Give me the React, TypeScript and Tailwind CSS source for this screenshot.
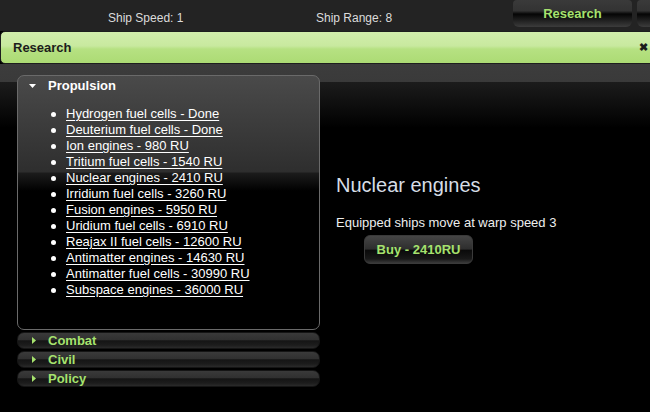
import React from "react";

const items = [
  "Hydrogen fuel cells - Done",
  "Deuterium fuel cells - Done",
  "Ion engines - 980 RU",
  "Tritium fuel cells - 1540 RU",
  "Nuclear engines - 2410 RU",
  "Irridium fuel cells - 3260 RU",
  "Fusion engines - 5950 RU",
  "Uridium fuel cells - 6910 RU",
  "Reajax II fuel cells - 12600 RU",
  "Antimatter engines - 14630 RU",
  "Antimatter fuel cells - 30990 RU",
  "Subspace engines - 36000 RU",
];

function Collapsed({ label }: { label: string }) {
  return (
    <div className="h-[17px] rounded-[7px] border border-[#151515] bg-[linear-gradient(to_bottom,#3a3a3a_0%,#303030_45%,#151515_52%,#1c1c1c_80%,#2a2a2a_100%)] flex items-center">
      <svg width="4" height="7" viewBox="0 0 4 7" className="ml-[14px]">
        <polygon points="0,0 4,3.5 0,7" fill="#a6e26e" />
      </svg>
      <span className="ml-[12px] text-[13px] font-bold text-[#a6e26e] leading-none">{label}</span>
    </div>
  );
}

const tabBg =
  "bg-[linear-gradient(to_bottom,#3a3a3a_0%,#333_40%,#050505_52%,#1a1a1a_70%,#3c3c3c_100%)]";

export default function App() {
  return (
    <div className="w-[650px] h-[412px] overflow-hidden bg-black font-['Liberation_Sans',Arial,sans-serif]">
      {/* top bar */}
      <div className="h-[31px] bg-[#232323] flex items-start overflow-hidden">
        <span className="shrink-0 ml-[108px] w-[208px] pt-[11px] text-[12px] leading-[14px] text-[#dcdcdc]">Ship Speed: 1</span>
        <span className="shrink-0 w-[197px] pt-[11px] text-[12px] leading-[14px] text-[#dcdcdc]">Ship Range: 8</span>
        <div className={`shrink-0 w-[119px] h-[27px] rounded-t-[4px] rounded-b-[6px] ${tabBg} flex items-center justify-center`}>
          <span className="text-[13px] font-bold text-[#a6e26e] leading-none">Research</span>
        </div>
        <div className={`shrink-0 ml-[5px] w-[40px] h-[27px] rounded-t-[4px] rounded-b-[6px] ${tabBg}`} />
      </div>

      {/* green header bar */}
      <div className="h-[33px] w-[654px] rounded-l-[5px] border border-[#1e1e1e] bg-[linear-gradient(to_bottom,#d2eeac_0%,#c8e99f_45%,#b6e182_55%,#acdb74_100%)] flex items-center justify-between pl-[12px] pr-[5px]">
        <span className="text-[13px] font-bold text-[#1c1c1c] leading-none">Research</span>
        <span className="text-[11px] font-bold text-[#1c1c1c] leading-none">✖</span>
      </div>

      {/* body */}
      <div className="h-[348px] bg-[linear-gradient(to_bottom,#3c3c3c_0px,#3a3a3a_18px,#1c1c1c_18px,#000_64px)] flex items-start">
        <div className="ml-[17px] mt-[11px] w-[303px] flex flex-col">
          <div className="h-[255px] rounded-[7px] border border-[#6a6a6a] bg-[linear-gradient(to_bottom,#4a4a4a_0px,#2e2e2e_96px,#1c1c1c_97px,#000_115px)]">
            <div className="h-[19px] flex items-center">
              <svg width="7" height="4" viewBox="0 0 7 4" className="ml-[11px]">
                <polygon points="0,0 7,0 3.5,4" fill="#ffffff" />
              </svg>
              <span className="ml-[12px] text-[13px] font-bold text-white leading-none">Propulsion</span>
            </div>
            <ul className="mt-[11px]">
              {items.map((t) => (
                <li key={t} className="h-[16px] flex items-center">
                  <span className="ml-[33px] w-[5px] h-[5px] rounded-full bg-white" />
                  <span className="ml-[10px] text-[13px] leading-[16px] text-white underline underline-offset-[2px]">{t}</span>
                </li>
              ))}
            </ul>
          </div>
          <div className="mt-[2px] flex flex-col gap-[2px]">
            <Collapsed label="Combat" />
            <Collapsed label="Civil" />
            <Collapsed label="Policy" />
          </div>
        </div>

        <div className="ml-[16px] mt-[110px] flex flex-col">
          <div className="text-[20px] leading-[23px] text-[#d6dde6]">Nuclear engines</div>
          <div className="mt-[18px] text-[13px] leading-[16px] text-[#eeeeee]">Equipped ships move at warp speed 3</div>
          <div className="ml-[28px] mt-[4px] w-[109px] h-[29px] rounded-[6px] border border-[#3a3a3a] bg-[linear-gradient(to_bottom,#454545_0%,#2e2e2e_48%,#0a0a0a_53%,#181818_85%,#3a3a3a_100%)] flex items-center justify-center">
            <span className="text-[13px] font-bold text-[#a6e26e] leading-none">Buy - 2410RU</span>
          </div>
        </div>
      </div>
    </div>
  );
}
